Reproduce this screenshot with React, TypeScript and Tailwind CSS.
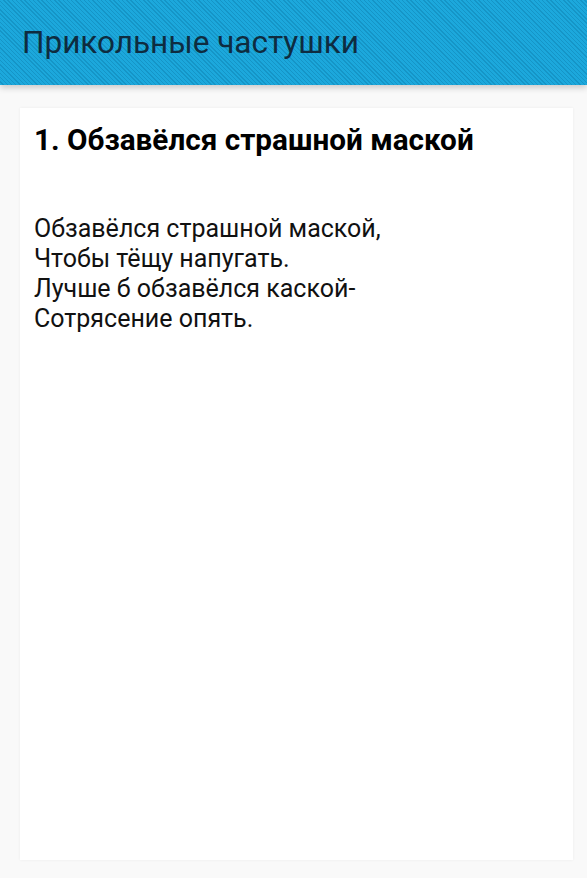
export default function App() {
  const lines = [
    'Обзавёлся страшной маской,',
    'Чтобы тёщу напугать.',
    'Лучше б обзавёлся каской-',
    'Сотрясение опять.',
  ];

  return (
    <div className="min-h-[878px] bg-[#f9f9f9] font-['Roboto',sans-serif] flex flex-col">
      {/* header */}
      <header className="h-[85px] shrink-0 flex items-center px-[22px] bg-[#1aa2d6] bg-[repeating-linear-gradient(45deg,#1ca8dc_0px,#1ca8dc_2px,#1595c7_2px,#1595c7_3px)] shadow-[0_3px_6px_rgba(0,0,0,0.18)] relative z-10">
        <h1 className="text-[31.5px] leading-none text-[#0e2c40]">
          Прикольные частушки
        </h1>
      </header>

      {/* card */}
      <div className="flex-1 flex pl-[20px] pr-[14px] pt-[23px] pb-[18px]">
        <main className="flex-1 bg-white shadow-[0_0_3px_rgba(0,0,0,0.06)] px-[14px] pt-[14px]">
          <h2 className="text-[29.7px] font-bold text-black leading-[36px]">
            1. Обзавёлся страшной маской
          </h2>
          <div className="mt-[56px] text-[25px] leading-[30px] text-[#111]">
            {lines.map((l) => (
              <p key={l}>{l}</p>
            ))}
          </div>
        </main>
      </div>
    </div>
  );
}
